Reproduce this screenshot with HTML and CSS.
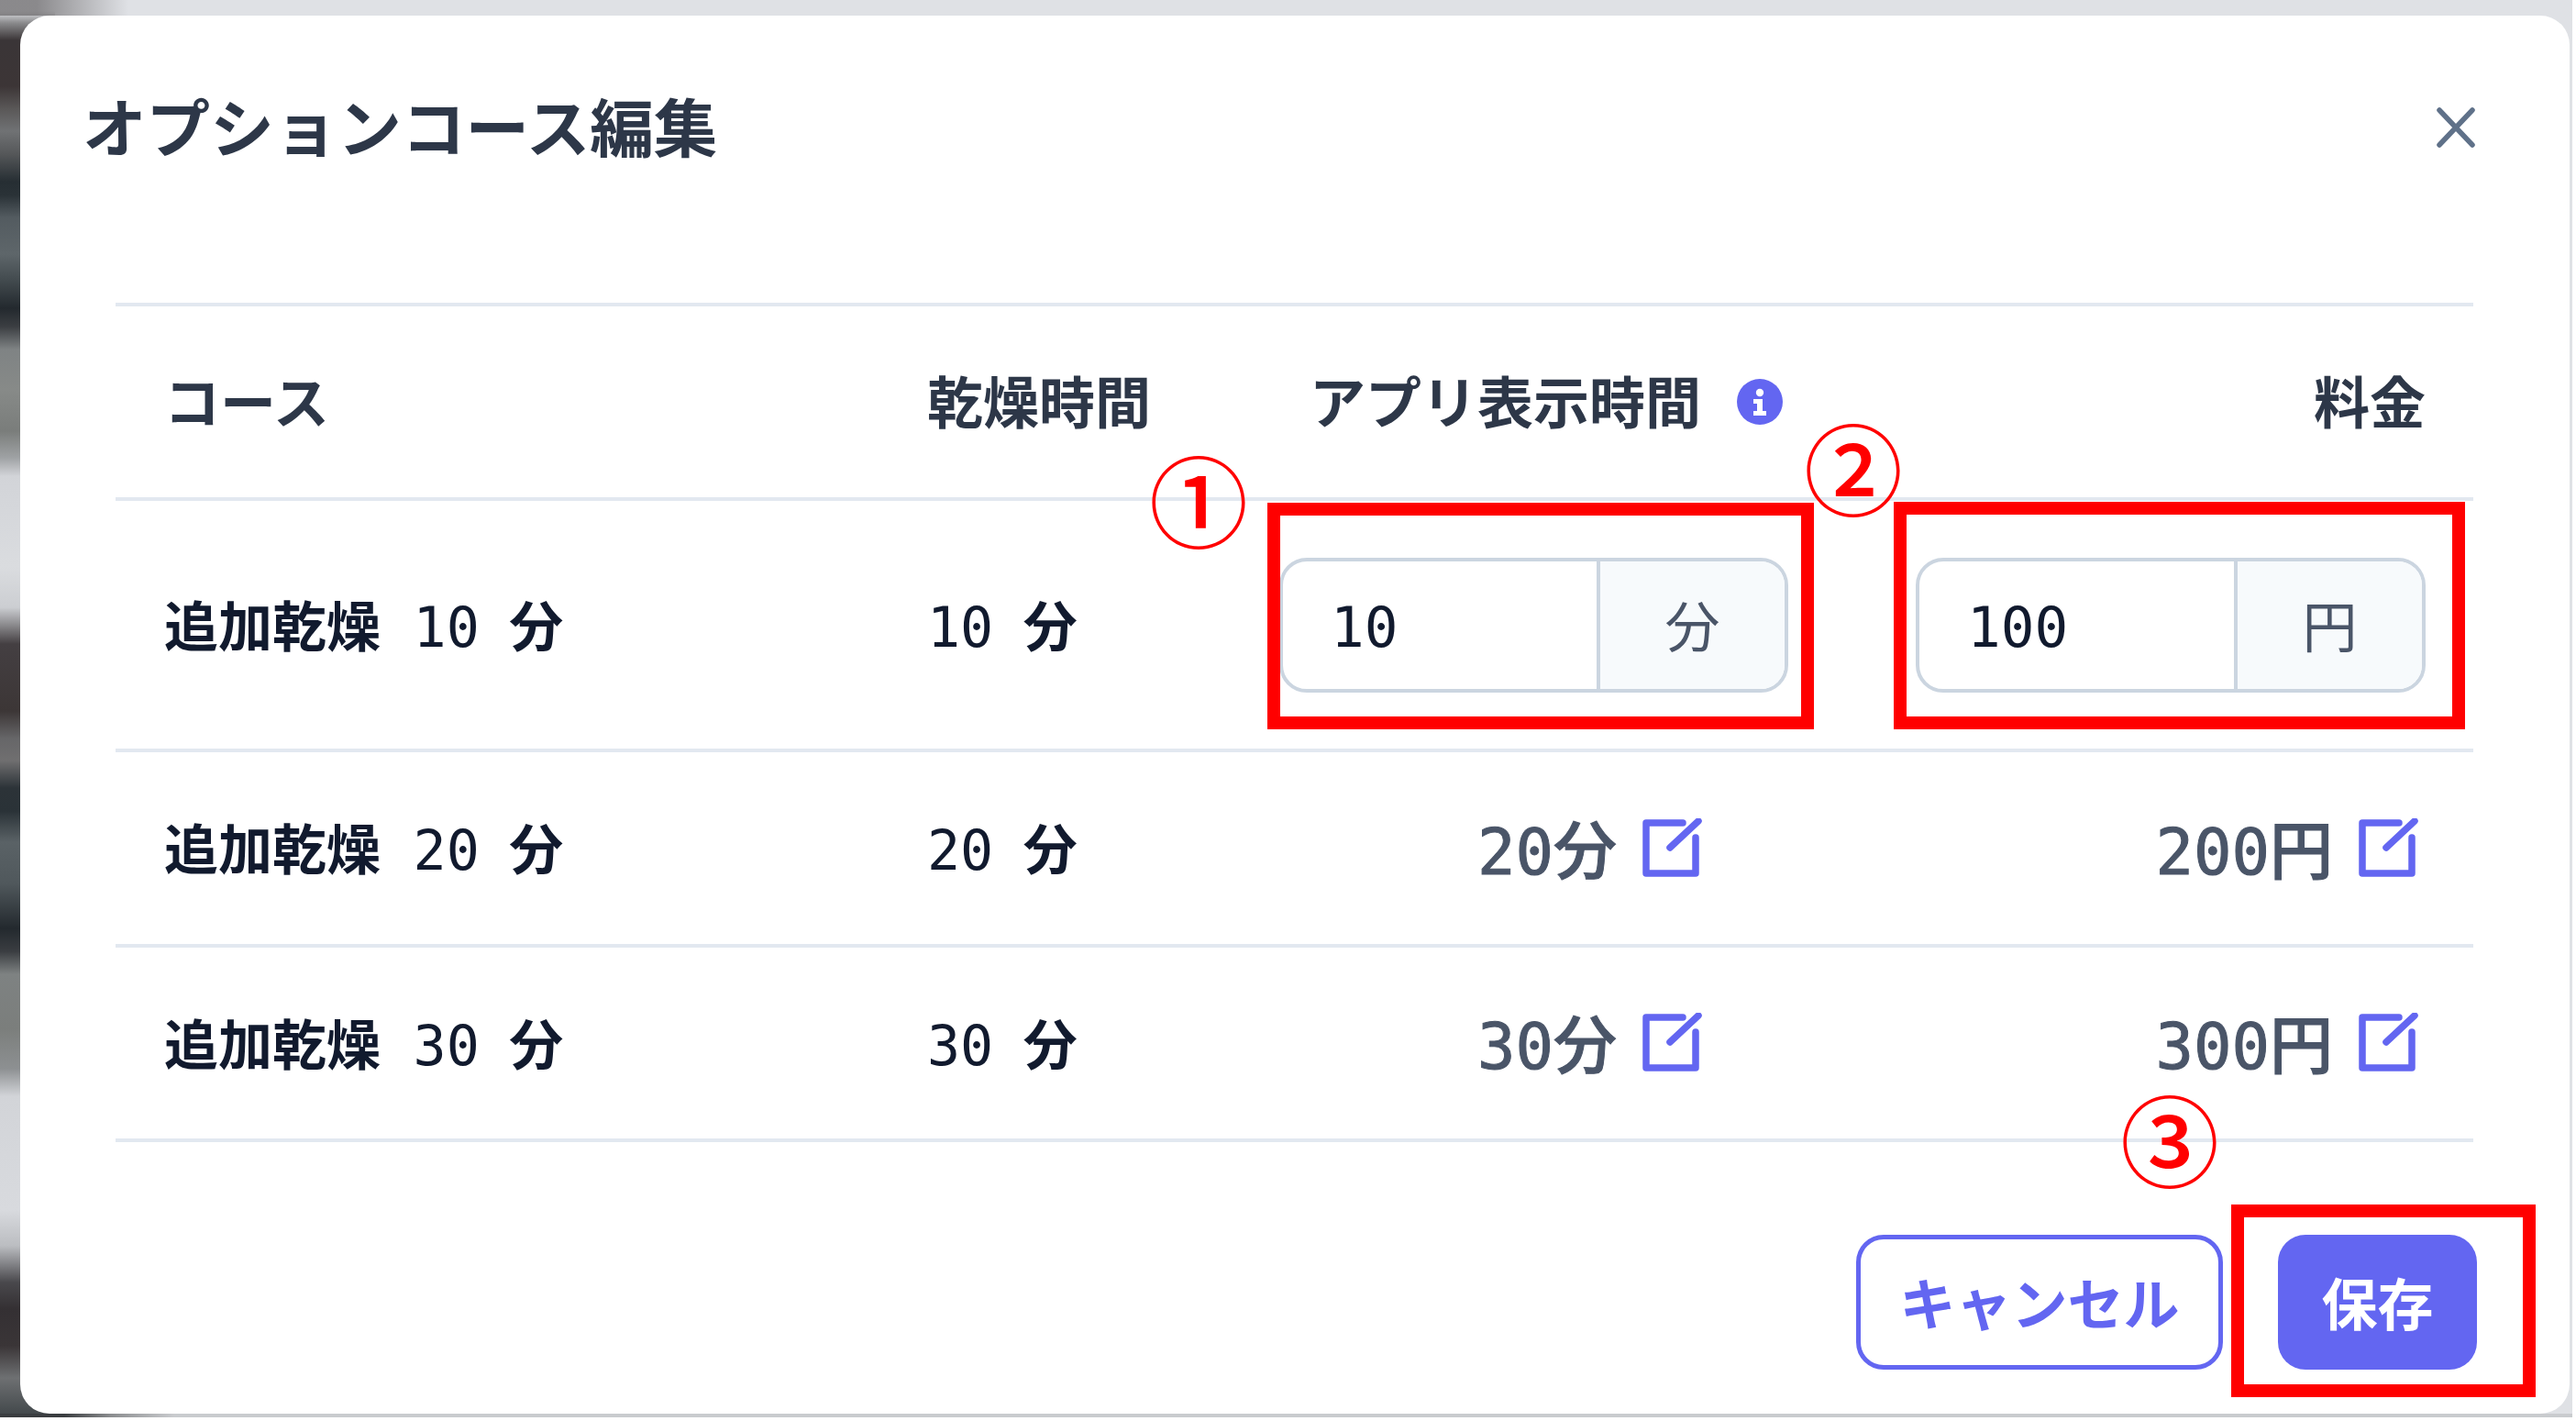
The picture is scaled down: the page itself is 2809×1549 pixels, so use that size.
FILE: index.html
```html
<!DOCTYPE html>
<html lang="ja">
<head>
	<meta charset="UTF-8">
	<title>オプションコース編集</title>
	<link rel="stylesheet" href="styles.css">
</head>
<body>
	<div class="page">
		<section class="modal">
			<header class="modal-head">
				<h1 class="modal-title">オプションコース編集</h1>
				<button class="close-btn" aria-label="閉じる">
					<svg viewBox="0 0 42 44" width="42" height="44"><path d="M3 3L39 41M39 3L3 41"/></svg>
				</button>
			</header>

			<table class="course-table">
				<colgroup>
					<col class="col-course">
					<col class="col-dry">
					<col class="col-time">
					<col class="col-price">
				</colgroup>
				<thead>
					<tr>
						<th>コース</th>
						<th>乾燥時間</th>
						<th class="th-time">
							<span class="th-inner">アプリ表示時間
								<svg class="info-icon" viewBox="0 0 50 50" width="50" height="50">
									<circle cx="25" cy="25" r="25"/>
									<circle class="info-mark" cx="25" cy="15" r="4.2"/>
									<path class="info-mark" d="M18 22h10v13h4v5H18v-5h4v-8h-4z"/>
								</svg>
							</span>
						</th>
						<th class="th-price">料金</th>
					</tr>
				</thead>
				<tbody>
					<tr class="row-edit">
						<td class="course">追加乾燥 <span class="num">10</span> 分</td>
						<td class="course"><span class="num">10</span> 分</td>
						<td class="cell-time-input">
							<div class="input-group">
								<div class="input-value">10</div>
								<div class="input-unit">分</div>
							</div>
						</td>
						<td class="cell-price-input">
							<div class="input-group input-group-price">
								<div class="input-value">100</div>
								<div class="input-unit">円</div>
							</div>
						</td>
					</tr>
					<tr class="row-a">
						<td class="course">追加乾燥 <span class="num">20</span> 分</td>
						<td class="course"><span class="num">20</span> 分</td>
						<td>
							<div class="value value-time"><span class="value-text">20分</span>
								<svg class="edit-icon" viewBox="0 0 66 66" width="66" height="66"><path d="M45 5H5V60H59V21M31 32L62 3"/></svg>
							</div>
						</td>
						<td>
							<div class="value value-price"><span class="value-text">200円</span>
								<svg class="edit-icon" viewBox="0 0 66 66" width="66" height="66"><path d="M45 5H5V60H59V21M31 32L62 3"/></svg>
							</div>
						</td>
					</tr>
					<tr class="row-b">
						<td class="course">追加乾燥 <span class="num">30</span> 分</td>
						<td class="course"><span class="num">30</span> 分</td>
						<td>
							<div class="value value-time"><span class="value-text">30分</span>
								<svg class="edit-icon" viewBox="0 0 66 66" width="66" height="66"><path d="M45 5H5V60H59V21M31 32L62 3"/></svg>
							</div>
						</td>
						<td>
							<div class="value value-price"><span class="value-text">300円</span>
								<svg class="edit-icon" viewBox="0 0 66 66" width="66" height="66"><path d="M45 5H5V60H59V21M31 32L62 3"/></svg>
							</div>
						</td>
					</tr>
				</tbody>
			</table>

			<footer class="modal-foot">
				<button class="btn btn-cancel">キャンセル</button>
				<button class="btn btn-save">保存</button>
			</footer>
		</section>

		<!-- red annotations drawn over the screenshot -->
		<div class="mark-box box-1"></div>
		<div class="mark-box box-2"></div>
		<div class="mark-box box-3"></div>
		<div class="mark-num num-1">①</div>
		<div class="mark-num num-2">②</div>
		<div class="mark-num num-3">③</div>
	</div>
</body>
</html>
```

FILE: styles.css
```css
* {
	box-sizing: border-box;
}
body {
	margin: 0;
	background: #fff;
	font-family: "Noto Sans CJK JP", sans-serif;
}
.page {
	position: relative;
	width: 2805px;
	height: 1545px;
	padding: 17px 3px 4px 22px;
	background-color: #dfe1e5;
	background-repeat: no-repeat;
	background-image:
		linear-gradient(90deg, #3a3d40 70px, #8a8c8e 120px, #c9cbce 190px),
		linear-gradient(90deg, rgba(110, 108, 110, .75) 40px, rgba(223, 225, 229, 0) 140px),
		linear-gradient(180deg,
			#dfe1e5 0, #dfe1e5 12px, #8a8a8c 25px, #3a3537 44px, #3c3536 94px, #5a5858 119px,
			#707274 143px, #555759 168px, #262e33 198px, #2a3237 213px, #535b60 237px, #5e666a 277px,
			#424a4e 306px, #23292e 336px, #3b3e42 356px, #7f8384 381px, #878a88 425px, #7a7d7b 470px,
			#9fa2a4 499px, #d2d4d8 519px, #d4d6da 544px, #dadcdf 618px, #ccced2 662px, #88878a 682px,
			#443f42 702px, #3c3636 775px, #666668 805px, #706f70 829px, #2c3338 859px, #2a3237 884px,
			#5a6266 918px, #50585c 963px, #23292e 1012px, #3a3d41 1037px, #7e8282 1062px, #7b7e7c 1121px,
			#8d9092 1165px, #d2d4d8 1195px, #d8dade 1319px, #bbbdc1 1358px, #49484c 1398px, #343033 1427px,
			#3a3537 1467px, #6e7072 1502px, #3f4548 1545px);
	background-size: 100% 4px, 100% 17px, 60px 100%;
	background-position: left bottom, left top, left top;
}

/* modal */
.modal {
	width: 2780px;
	height: 1524px;
	background: #fff;
	border-radius: 32px;
}
.modal-head {
	display: flex;
	justify-content: space-between;
	height: 313px;
	padding: 77px 103px 0 68px;
}
.modal-title {
	margin: 0;
	font-size: 69.6px;
	line-height: 84px;
	font-weight: 700;
	color: #2d3748;
}
.close-btn {
	width: 42px;
	height: 44px;
	margin-top: 23px;
	padding: 0;
	border: 0;
	background: none;
}
.close-btn svg {
	display: block;
	fill: none;
	stroke: #5f7189;
	stroke-width: 5.5;
	stroke-linecap: round;
}

/* table */
.course-table {
	width: 2571px;
	margin-left: 104px;
	border-collapse: separate;
	border-spacing: 0;
	table-layout: fixed;
	border-top: 4px solid #e2e8f0;
}
.col-course { width: 832px; }
.col-dry { width: 383px; }
.col-time { width: 694px; }
.col-price { width: 662px; }
th, td {
	padding: 0 0 0 53px;
	border-bottom: 4px solid #e2e8f0;
	text-align: left;
	vertical-align: middle;
}
th {
	height: 212px;
	padding-bottom: 5px;
	font-size: 61px;
	font-weight: 700;
	color: #2d3748;
}
.th-time {
	padding-left: 87px;
}
.th-inner {
	display: flex;
	align-items: center;
	gap: 40px;
}
.th-price {
	padding-right: 52px;
	text-align: right;
}
.info-icon {
	flex: none;
	fill: #6366f1;
	position: relative;
	top: 2px;
	left: -1px;
}
.info-mark {
	fill: #fff;
}
.row-edit td { height: 274px; }
.row-a td { height: 213px; }
.row-b td { height: 212px; }
.course {
	padding-bottom: 4px;
	font-family: "DejaVu Sans Mono", "Noto Sans CJK JP", monospace;
	font-size: 59px;
	font-weight: 700;
	color: #111a2e;
}
.num {
	margin-right: -3px;
	font-weight: 400;
	font-size: 60px;
}

/* inline inputs */
.row-edit .cell-time-input, .row-edit .cell-price-input {
	padding-left: 54px;
}
.input-group {
	display: flex;
	width: 555px;
	height: 147px;
	border: 4px solid #cbd5e0;
	border-radius: 30px;
	overflow: hidden;
}
.input-group-price {
	width: 556px;
}
.input-value {
	flex: 1;
	display: flex;
	align-items: center;
	padding: 5px 0 0 52px;
	font-family: "DejaVu Sans Mono", monospace;
	font-size: 61px;
	color: #111a2e;
}
.input-unit {
	display: flex;
	align-items: center;
	justify-content: center;
	width: 205px;
	padding-bottom: 4px;
	border-left: 4px solid #cbd5e0;
	background: #f7fafc;
	font-size: 60px;
	color: #4a5568;
}

/* read only values */
.value {
	display: flex;
	align-items: center;
	justify-content: flex-end;
	gap: 27px;
	font-family: "DejaVu Sans Mono", "Noto Sans CJK JP", monospace;
	font-size: 69px;
	font-weight: 500;
	color: #4a5568;
}
.value-text {
	margin-bottom: 4px;
	-webkit-text-stroke: 1px #4a5568;
}
.value-time {
	padding-right: 179px;
}
.value-price {
	padding-right: 60px;
}
.edit-icon {
	flex: none;
	fill: none;
	stroke: #6366f1;
	stroke-width: 7.5;
	stroke-linecap: round;
	stroke-linejoin: round;
}

/* footer */
.modal-foot {
	display: flex;
	justify-content: flex-end;
	gap: 60px;
	margin-top: 101px;
	padding-right: 101px;
}
.btn {
	height: 147px;
	padding: 0 0 3px;
	border-radius: 30px;
	font-family: inherit;
	font-size: 61px;
	font-weight: 700;
}
.btn-cancel {
	width: 400px;
	border: 5px solid #6366f1;
	background: #fff;
	color: #6366f1;
}
.btn-save {
	width: 217px;
	border: 0;
	background: #6366f1;
	color: #fff;
}

/* annotations */
.mark-box {
	position: absolute;
	border: 14px solid #f00;
}
.box-1 { left: 1382px; top: 548px; width: 596px; height: 247px; }
.box-2 { left: 2065px; top: 547px; width: 623px; height: 248px; }
.box-3 { left: 2433px; top: 1313px; width: 332px; height: 210px; }
.mark-num {
	position: absolute;
	display: flex;
	align-items: center;
	justify-content: center;
	width: 120px;
	height: 120px;
	font-size: 108px;
	font-weight: 500;
	line-height: 1;
	color: #f00;
}
.num-1 { left: 1247px; top: 482px; }
.num-2 { left: 1961px; top: 447px; }
.num-3 { left: 2306px; top: 1179px; }
```
